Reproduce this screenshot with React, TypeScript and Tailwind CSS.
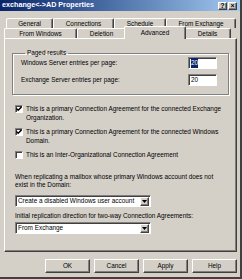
const raised =
  "border border-t-white border-l-white border-r-[#404040] border-b-[#404040] shadow-[inset_-1px_-1px_0_#808080]";
const sunken =
  "border border-t-[#808080] border-l-[#808080] border-r-white border-b-white shadow-[inset_1px_1px_0_#404040]";

function Tab({ label, w, active }: { label: string; w: string; active?: boolean }) {
  return (
    <div
      className={`${w} flex items-center justify-center rounded-t-[2px] border-t border-l border-r border-t-white border-l-white border-r-[#404040] shadow-[inset_-1px_0_0_#808080] bg-[#d4d0c8] ${
        active ? "relative z-10 -mt-[2px] h-[13px] -mb-px -mx-[2px] px-[2px]" : "h-[10px]"
      }`}
    >
      {label}
    </div>
  );
}

function CheckBox({ checked, lines }: { checked?: boolean; lines: string[] }) {
  return (
    <div className="flex gap-[3px] items-start">
      <div className={`${sunken} w-[8px] h-[8px] shrink-0 bg-white flex items-center justify-center mt-[1px]`}>
        {checked && (
          <svg width="6" height="6" viewBox="0 0 7 7">
            <path d="M0.5 3 L2.5 5 L6.5 1" stroke="#000" strokeWidth="1.6" fill="none" />
          </svg>
        )}
      </div>
      <div className="leading-[9px]">
        {lines.map((l) => (
          <div key={l}>{l}</div>
        ))}
      </div>
    </div>
  );
}

function Select({ value }: { value: string }) {
  return (
    <div className={`${sunken} w-[136px] h-[12px] bg-white flex items-center pl-[2px] pr-px`}>
      <div className="flex-1 whitespace-nowrap overflow-hidden">{value}</div>
      <div className={`${raised} w-[9px] h-[9px] bg-[#d4d0c8] flex items-center justify-center`}>
        <svg width="5" height="3" viewBox="0 0 5 3">
          <path d="M0 0 H5 L2.5 3 Z" fill="#000" />
        </svg>
      </div>
    </div>
  );
}

function Button({ label }: { label: string }) {
  return (
    <div className={`${raised} w-[45px] h-[14px] bg-[#d4d0c8] flex items-center justify-center`}>{label}</div>
  );
}

export default function App() {
  return (
    <div className="w-[242px] h-[279px] bg-[#d4d0c8] border-r-2 border-b-2 border-r-[#404040] border-b-[#404040] font-['Liberation_Sans',Arial,sans-serif] text-[6.4px] text-black overflow-hidden">
      <div className="h-[11px] bg-gradient-to-r from-[#0a246a] to-[#a6caf0] flex items-center pl-[2px] pr-[3px]">
        <div className="flex-1 text-white font-bold text-[7.2px] whitespace-nowrap">exchange&lt;-&gt;AD Properties</div>
        <div className={`${raised} w-[9px] h-[8px] bg-[#d4d0c8] flex items-center justify-center font-bold text-[7px] leading-none`}>?</div>
        <div className={`${raised} w-[9px] h-[8px] bg-[#d4d0c8] flex items-center justify-center font-bold text-[7px] leading-none ml-px`}>×</div>
      </div>

      <div className="pl-[4px] pr-[3px] pt-[7px]">
        <div className="flex pl-[2px] whitespace-nowrap">
          <Tab label="General" w="w-[47px]" />
          <Tab label="Connections" w="w-[61px]" />
          <Tab label="Schedule" w="w-[52px]" />
          <Tab label="From Exchange" w="w-[70px]" />
        </div>
        <div className="flex whitespace-nowrap h-[10px]">
          <Tab label="From Windows" w="w-[73px]" />
          <Tab label="Deletion" w="w-[49px]" />
          <Tab label="Advanced" w="w-[62px]" active />
          <Tab label="Details" w="w-[47px]" />
        </div>

        <div className={`${raised} h-[214px] bg-[#d4d0c8] pt-[10px] px-[7px] whitespace-nowrap`}>
          <fieldset className="border border-[#808080] shadow-[inset_1px_1px_0_#fff,1px_1px_0_#fff] h-[46px] pl-[8px] pr-[11px] pb-[5px]">
            <legend className="px-[2px] ml-[4px] leading-[8px]">Paged results</legend>
            <div className="flex items-center justify-between h-[12px]">
              <span>Windows Server entries per page:</span>
              <div className={`${sunken} w-[29px] h-[12px] bg-white flex items-center pl-[2px]`}>
                <span className="bg-[#0a246a] text-white">20</span>
              </div>
            </div>
            <div className="flex items-center justify-between h-[12px] mt-[5px]">
              <span>Exchange Server entries per page:</span>
              <div className={`${sunken} w-[29px] h-[12px] bg-white flex items-center pl-[2px]`}>20</div>
            </div>
          </fieldset>

          <div className="pl-[3px] mt-[9px] flex flex-col gap-[5px]">
            <CheckBox
              checked
              lines={["This is a primary Connection Agreement for the connected Exchange", "Organization."]}
            />
            <CheckBox
              checked
              lines={["This is a primary Connection Agreement for the connected Windows", "Domain."]}
            />
            <CheckBox lines={["This is an Inter-Organizational Connection Agreement"]} />
          </div>

          <div className="pl-[3px] mt-[14px] leading-[8px]">
            <div>When replicating a mailbox whose primary Windows account does not</div>
            <div>exist in the Domain:</div>
            <div className="mt-[6px]">
              <Select value="Create a disabled Windows user account" />
            </div>
            <div className="mt-[4px] leading-[9px]">Initial replication direction for two-way Connection Agreements:</div>
            <div className="mt-[2px]">
              <Select value="From Exchange" />
            </div>
          </div>
        </div>

        <div className="flex justify-end gap-[4px] mt-[7px]">
          <Button label="OK" />
          <Button label="Cancel" />
          <Button label="Apply" />
          <Button label="Help" />
        </div>
      </div>
    </div>
  );
}
